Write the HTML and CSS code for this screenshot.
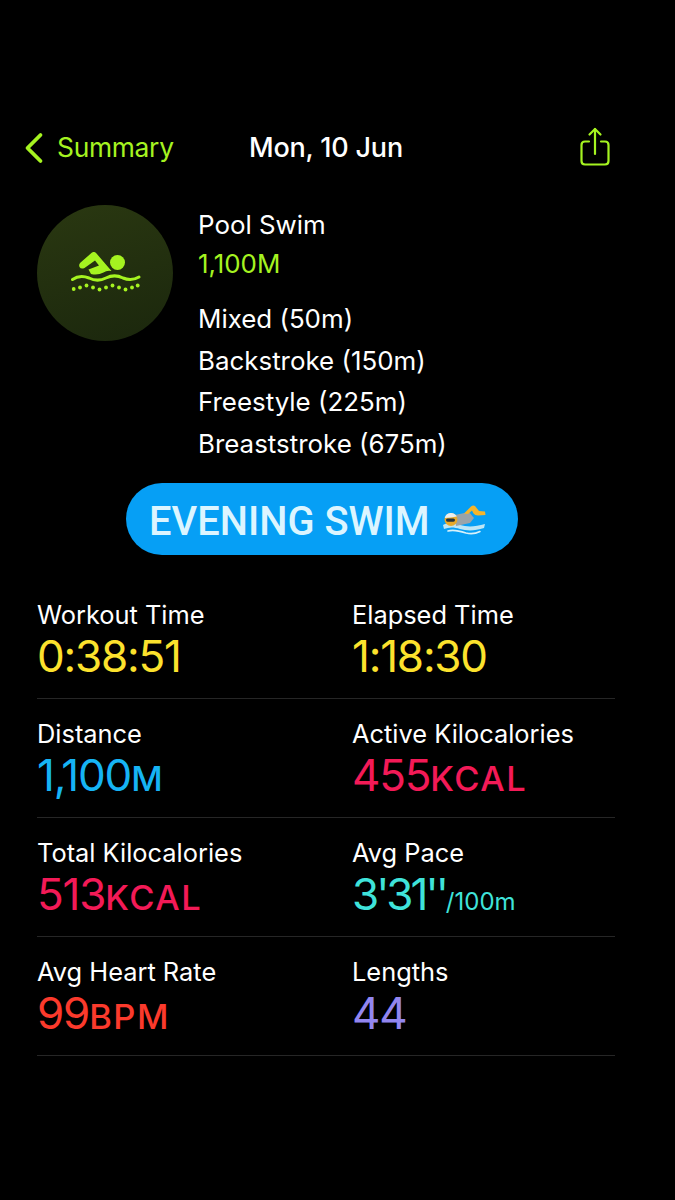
FILE: index.html
```html
<!DOCTYPE html>
<html lang="en">
<head>
<meta charset="utf-8">
<title>Pool Swim</title>
<link rel="stylesheet" href="styles.css">
</head>
<body>
<main class="page">
  <header class="nav">
    <div class="back">
      <svg class="chev" width="20" height="32" viewBox="0 0 20 32"><path d="M16.500 3 L3.500 16 L16.500 29" fill="none" stroke="#a5f320" stroke-width="3.800" stroke-linecap="round" stroke-linejoin="round"/></svg>
      <span class="back-label">Summary</span>
    </div>
    <div class="date">Mon, 10 Jun</div>
    <svg class="share" width="32" height="40" viewBox="0 0 32 40"><g fill="none" stroke="#a5f320" stroke-width="2.200" stroke-linecap="round" stroke-linejoin="round"><path d="M10 14.500 H6 Q2.500 14.500 2.500 18 V34 Q2.500 37.500 6 37.500 H26 Q29.500 37.500 29.500 34 V18 Q29.500 14.500 26 14.500 H22"/><path d="M16 27 V2"/><path d="M10.500 7.500 L16 2 L21.500 7.500"/></g></svg>
  </header>

  <section class="summary">
    <div class="badge">
      <svg width="72" height="42" viewBox="0 0 72 42">
        <g fill="#a5f320">
          <circle cx="47.500" cy="10.500" r="7.500"/>
          <path d="M10.300 10.800 L22 0.500 Q24.500 -1 26.500 1.500 L41.500 19 Q37 18 33.500 20.500 Q28 23.500 21 22 L18.500 17.500 L29 13.500 L25 8.500 L14.500 16 Q11 17.500 9.500 15 Q8.500 12.500 10.300 10.800Z"/>
        </g>
        <path d="M2.500 27.500 C8 23.500 13 23.500 19 26 C25 29 30 29 36 26 C42 23 47 23 53 26 C59 28.500 64 28 69 25" fill="none" stroke="#a5f320" stroke-width="3" stroke-linecap="round"/>
        <g fill="#a5f320">
          <circle cx="3.700" cy="37" r="1.900"/><circle cx="10" cy="35.500" r="1.900"/><circle cx="16.500" cy="33.500" r="1.900"/><circle cx="23" cy="35.500" r="1.900"/><circle cx="29.500" cy="37.500" r="1.900"/><circle cx="36" cy="35.500" r="1.900"/><circle cx="42.500" cy="33.500" r="1.900"/><circle cx="49" cy="35.500" r="1.900"/><circle cx="55.500" cy="37.500" r="1.900"/><circle cx="62" cy="35.500" r="1.900"/><circle cx="67.700" cy="33.500" r="1.900"/>
        </g>
      </svg>
    </div>
    <div class="details">
      <div class="kind">Pool Swim</div>
      <div class="total">1,100M</div>
      <ul class="strokes">
        <li>Mixed (50m)</li>
        <li>Backstroke (150m)</li>
        <li>Freestyle (225m)</li>
        <li>Breaststroke (675m)</li>
      </ul>
    </div>
  </section>

  <div class="pill-row">
    <div class="pill">
      <span class="pill-text">EVENING SWIM</span>
      <svg class="swimmer" width="44" height="30" viewBox="0 0 44 30">
        <path d="M1 20 C7 17 12 18 18 20 C25 22 33 22 43 19 L42 23 C33 26 25 26 18 24 C12 22 7 22 2 24Z" fill="#bfe6f5"/>
        <path d="M6 26 C12 24 18 26 24 28 C30 29.500 35 28 38 26.500" fill="none" stroke="#d8f1fa" stroke-width="1.600" stroke-linecap="round"/>
        <path d="M13 10 L27 7 L32 13 L28 18 L14 21 Z" fill="#9aa3a8"/>
        <path d="M22 8.500 L29 1.500 Q31 0 33 1 L37 6 L43 6.500 L43.500 10 L36 10.500 Q33 10.500 31.500 8.500 L30 5.500 L26 9 Z" fill="#f5b52c"/>
        <circle cx="9" cy="14.500" r="6.500" fill="#e8a92a"/>
        <path d="M2.700 13 A6.500 6.500 0 0 1 14.800 11.500 L9 12.500 Z" fill="#e9eef0"/>
        <rect x="4" y="13.500" width="9" height="3.200" rx="1.600" fill="#26323a"/>
      </svg>
    </div>
  </div>

  <dl class="stats">
    <div class="stat"><dt>Workout Time</dt><dd class="yellow">0:38:51</dd></div>
    <div class="stat"><dt>Elapsed Time</dt><dd class="yellow">1:18:30</dd></div>
    <div class="stat"><dt>Distance</dt><dd class="blue">1,100<small>M</small></dd></div>
    <div class="stat"><dt>Active Kilocalories</dt><dd class="pink">455<small>KCAL</small></dd></div>
    <div class="stat"><dt>Total Kilocalories</dt><dd class="pink">513<small>KCAL</small></dd></div>
    <div class="stat"><dt>Avg Pace</dt><dd class="teal">3'31''<small class="thin">/100m</small></dd></div>
    <div class="stat"><dt>Avg Heart Rate</dt><dd class="red">99<small>BPM</small></dd></div>
    <div class="stat"><dt>Lengths</dt><dd class="violet">44</dd></div>
  </dl>
</main>
</body>
</html>
```
FILE: styles.css
```css
* { box-sizing: border-box; }
html, body { margin: 0; padding: 0; background: #000; }
body { font-family: Inter, "Noto Sans", sans-serif; color: #fff; }
.page { width: 675px; height: 1200px; padding-top: 125px; overflow: hidden; }

.nav { display: grid; grid-template-columns: 249px 1fr auto; align-items: center; height: 46px; padding: 0 64px 0 0; }
.back { display: flex; align-items: center; gap: 13px; padding-left: 24px; color: #a5f320; font-size: 26.400px; letter-spacing: -0.300px; }
.back-label { margin-top: -2px; }
.date { font-size: 27px; font-weight: 500; letter-spacing: -0.200px; margin-top: -1px; }
.share { display: block; margin-top: -2px; }

.summary { display: flex; gap: 25px; padding: 34px 0 0 37px; }
.badge { width: 136px; height: 136px; border-radius: 50%; background: linear-gradient(165deg, #2a3811 0%, #1b270d 100%); display: flex; align-items: center; justify-content: center; flex: none; padding-left: 1px; }
.details { font-size: 25.900px; line-height: 42px; }
.kind { line-height: 40px; }
.total { color: #a5f320; line-height: 38px; margin-bottom: 14px; }
.strokes { list-style: none; margin: 0; padding: 1px 0 0; }
.strokes li { height: 42px; }
.strokes li + li { margin-top: -0.330px; }

.pill-row { display: flex; padding: 18px 0 0 126px; }
.pill { width: 392px; height: 72px; border-radius: 36px; background: #069ff5; display: flex; align-items: center; gap: 12px; padding-left: 23px; }
.pill-text { font-family: Roboto, sans-serif; font-size: 39.800px; font-weight: 500; color: #dcf5ff; white-space: nowrap; margin-top: 5px; }
.swimmer { display: block; margin-top: 2px; flex: none; }

.stats { display: grid; grid-template-columns: 315px 263px; margin: 25px 0 0 37px; width: 578px; }
.stat { height: 119px; border-bottom: 1px solid #262626; padding-top: 19px; }
.stat dt { font-size: 25.400px; line-height: 32px; }
.stat dd { margin: 0; font-size: 44px; line-height: 50px; letter-spacing: -1.200px; white-space: nowrap; }
.stat small { font-size: 34.500px; font-weight: 500; letter-spacing: 1.500px; }
.stat dd.teal { letter-spacing: -3px; }
.stat small.thin { font-size: 24px; font-weight: 400; letter-spacing: 0; }

.yellow { color: #fce22d; }
.blue { color: #16b4f5; }
.pink { color: #f31a57; }
.teal { color: #3fe3da; }
.red { color: #fb3a2c; }
.violet { color: #9286f0; }
```
